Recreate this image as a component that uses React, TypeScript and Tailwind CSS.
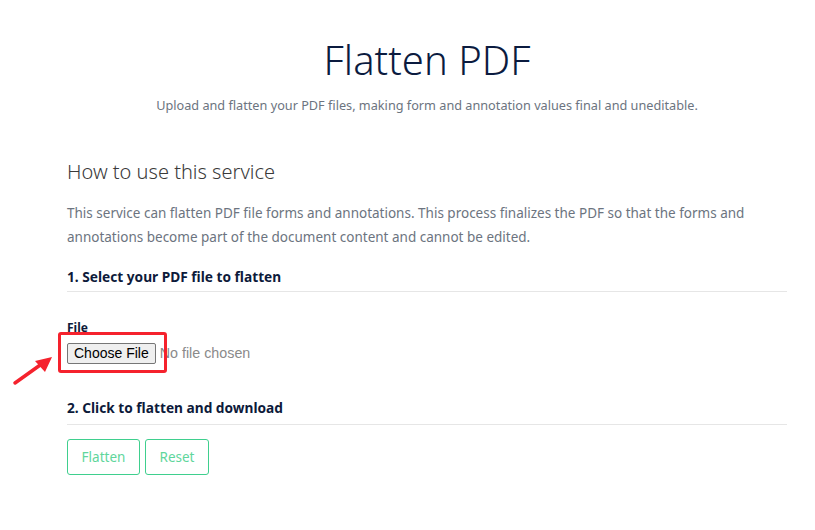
import React from "react";

const SANS = "font-['Noto_Sans','Open_Sans',sans-serif]";

function SectionHeading({ children, pb }: { children: React.ReactNode; pb: string }) {
  return (
    <div className={`border-b border-[#e6e6e6] ${pb}`}>
      <h3 className={`${SANS} text-[13.7px] font-bold leading-[20px] text-[#0d1a3a]`}>{children}</h3>
    </div>
  );
}

export default function App() {
  return (
    <div className={`${SANS} min-h-[530px] w-[815px] bg-white`}>
      <div className="ml-[67px] w-[720px] pt-[28px]">
        <header className="flex flex-col items-center">
          <h1 className="text-[40px] font-light leading-[64px] text-[#0b1b3f]">Flatten PDF</h1>
          <p className="mt-[3px] text-[12.7px] leading-[20px] text-[#6c7480]">
            Upload and flatten your PDF files, making form and annotation values final and uneditable.
          </p>
        </header>

        <section className="mt-[41px]">
          <h2 className="text-[20px] font-light leading-[32px] text-[#3a3a3a]">How to use this service</h2>
          <p className="mt-[13px] text-[13.5px] leading-[24px] text-[#6c7480]">
            This service can flatten PDF file forms and annotations. This process finalizes the PDF so that the forms and
            annotations become part of the document content and cannot be edited.
          </p>

          <div className="mt-[18px]">
            <SectionHeading pb="pb-[4px]">1. Select your PDF file to flatten</SectionHeading>
          </div>

          <div className="mt-[28px]">
            <label className="block text-[12px] font-bold leading-[16px] text-[#0d1a3a]">File</label>
            <div className="relative mt-[7px] flex items-center">
              <div className="pointer-events-none absolute left-[-9px] top-[-11px] h-[41px] w-[109px] rounded-[3px] border-[3px] border-[#f5222d]" />
              <button className="h-[21px] rounded-[2px] border border-[#767676] bg-[#efefef] px-[6px] font-['Liberation_Sans',Arial,sans-serif] text-[14px] leading-[19px] text-black">
                Choose File
              </button>
              <span className="ml-[4px] font-['Liberation_Sans',Arial,sans-serif] text-[14.3px] text-[#8a8a8a]">No file chosen</span>
            </div>
          </div>

          <div className="mt-[34px]">
            <SectionHeading pb="pb-[6px]">2. Click to flatten and download</SectionHeading>
          </div>

          <div className="mt-[14px] flex gap-[5px]">
            <button className="h-[36px] w-[73px] rounded-[3px] border border-[#3fcf8e] text-[13.5px] text-[#5fd69c]">Flatten</button>
            <button className="h-[36px] w-[64px] rounded-[3px] border border-[#3fcf8e] text-[13.5px] text-[#5fd69c]">Reset</button>
          </div>
        </section>
      </div>

      <svg className="absolute left-[12px] top-[352px]" width="44" height="36" viewBox="0 0 44 36">
        <path d="M3 31 L31 11" stroke="#f5222d" strokeWidth="3.5" strokeLinecap="round" />
        <path d="M40 5 L23 9 L33 20 Z" fill="#f5222d" />
      </svg>
    </div>
  );
}
